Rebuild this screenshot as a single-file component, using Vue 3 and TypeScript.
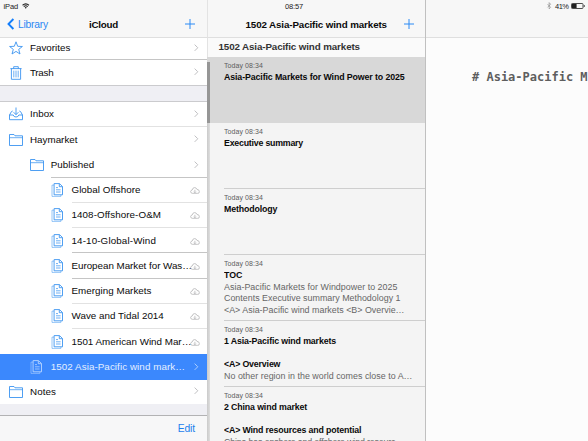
<script setup lang="ts">
interface Row {
  label: string
  icon: 'star' | 'trash' | 'inbox' | 'folder' | 'doc'
  level: number
  end: 'chevron' | 'cloud'
  selected?: boolean
  line?: 'dark' | 'light'
  w: number
}
interface Line { text: string; kind: 'bold' | 'plain'; w: number }

const places: Row[] = [
  { label: 'Favorites', icon: 'star', level: 0, end: 'chevron', line: 'dark', w: 40.4 },
  { label: 'Trash', icon: 'trash', level: 0, end: 'chevron', w: 23.4 },
]
const groups: Row[] = [
  { label: 'Inbox', icon: 'inbox', level: 0, end: 'chevron', line: 'light', w: 24 },
  { label: 'Haymarket', icon: 'folder', level: 0, end: 'chevron', w: 47.5 },
  { label: 'Published', icon: 'folder', level: 1, end: 'chevron', line: 'dark', w: 43.5 },
  { label: 'Global Offshore', icon: 'doc', level: 2, end: 'cloud', line: 'light', w: 69 },
  { label: '1408-Offshore-O&M', icon: 'doc', level: 2, end: 'cloud', line: 'light', w: 89.5 },
  { label: '14-10-Global-Wind', icon: 'doc', level: 2, end: 'cloud', line: 'dark', w: 84.5 },
  { label: 'European Market for Was…', icon: 'doc', level: 2, end: 'cloud', line: 'dark', w: 120.5 },
  { label: 'Emerging Markets', icon: 'doc', level: 2, end: 'cloud', line: 'light', w: 80 },
  { label: 'Wave and Tidal 2014', icon: 'doc', level: 2, end: 'cloud', line: 'light', w: 92.5 },
  { label: '1501 American Wind Mar…', icon: 'doc', level: 2, end: 'cloud', w: 120.5 },
  { label: '1502 Asia-Pacific wind mark…', icon: 'doc', level: 1, end: 'chevron', selected: true, w: 135 },
  { label: 'Notes', icon: 'folder', level: 0, end: 'chevron', w: 25.9 },
]
const sheets: { active?: boolean; lines: Line[] }[] = [
  { active: true, lines: [{ text: 'Asia-Pacific Markets for Wind Power to 2025', kind: 'bold', w: 180.5 }] },
  { lines: [{ text: 'Executive summary', kind: 'bold', w: 79 }] },
  { lines: [{ text: 'Methodology', kind: 'bold', w: 53.3 }] },
  {
    lines: [
      { text: 'TOC', kind: 'bold', w: 18.3 },
      { text: 'Asia-Pacific Markets for Windpower to 2025', kind: 'plain', w: 173.5 },
      { text: 'Contents Executive summary Methodology 1', kind: 'plain', w: 176.5 },
      { text: '<A> Asia-Pacific wind markets <B> Overvie…', kind: 'plain', w: 181 },
    ],
  },
  {
    lines: [
      { text: '1 Asia-Pacific wind markets', kind: 'bold', w: 112.3 },
      { text: '', kind: 'plain', w: 0 },
      { text: '<A> Overview', kind: 'bold', w: 56.3 },
      { text: 'No other region in the world comes close to A…', kind: 'plain', w: 189 },
    ],
  },
  {
    lines: [
      { text: '2 China wind market', kind: 'bold', w: 83 },
      { text: '', kind: 'plain', w: 0 },
      { text: '<A> Wind resources and potential', kind: 'bold', w: 137.3 },
      { text: 'China has onshore and offshore wind resourc…', kind: 'plain', w: 180 },
    ],
  },
]

const ctx = document.createElement('canvas').getContext('2d')!
/** Tracking that makes a label occupy the given width. */
function track(text: string, width: number, font: string) {
  if (!text) return {}
  ctx.font = `${font} "Liberation Sans"`
  return { letterSpacing: `${((width - ctx.measureText(text).width) / text.length).toFixed(3)}px` }
}
</script>

<template>
  <div class="screen">
    <aside class="sidebar">
      <header class="bar">
        <div class="status">
          <span :style="track('iPad', 14.5, '7.5px')">iPad</span>
          <svg class="wifi" viewBox="0 0 8 6"><path d="M.6 2.2Q4-.8 7.4 2.2M1.9 3.6Q4 1.8 6.1 3.6" /><path class="solid" d="M2.9 4.5Q4 3.7 5.1 4.5L4 5.8Z" /></svg>
        </div>
        <div class="nav">
          <svg class="back" viewBox="0 0 8 12"><path d="M6.4 1 1.5 6l4.9 5" /></svg>
          <span class="library" :style="track('Library', 30, '10.3px')">Library</span>
          <b class="title" :style="track('iCloud', 28.9, 'bold 9.8px')">iCloud</b>
          <svg class="plus" viewBox="0 0 10 10"><path d="M5 0v10M0 5h10" /></svg>
        </div>
      </header>
      <div class="tree">
        <template v-for="(group, g) in [places, groups]" :key="g">
          <div v-if="g" class="gap"></div>
          <div
            v-for="row in group"
            :key="row.label"
            class="row"
            :class="['level' + row.level, row.icon, { selected: row.selected, first: row.icon === 'star', last: row.label === 'Notes' }]"
          >
            <span class="icon">
              <svg v-if="row.icon === 'star'" viewBox="0 0 14 14"><path d="M7 .8 8.7 5.3 13.4 5.5 9.7 8.4 11 13 7 10.4 3 13 4.3 8.4.6 5.5 5.3 5.3Z" /></svg>
              <svg v-else-if="row.icon === 'trash'" viewBox="0 0 14 14"><path d="M1.4 2.6h11.2M4.7 2.6V.7h4.6v1.9M2.4 2.6v10.7h9.2V2.6" /><path class="thin" d="M4.8 4.6v6.8M7 4.6v6.8M9.2 4.6v6.8" /></svg>
              <svg v-else-if="row.icon === 'inbox'" viewBox="0 0 14 14"><path d="M7 .5v7M4.6 5.2 7 7.7l2.4-2.5M3.7 4 2.5 4.5.5 8v4.7h13V8l-2-3.5L10.3 4M.5 8h3.7q.5 2 2.8 2t2.8-2h3.7" /></svg>
              <svg v-else-if="row.icon === 'folder'" viewBox="0 0 14 14"><path d="M.5 12.5v-11H5l1 1.3h7.5v9.7Z" /><path class="thin" d="M.5 4.7h13" /></svg>
              <svg v-else viewBox="0 0 14 14"><path d="M3.1.6h5.4l3 2.9v8.3H3.1ZM8.3.8v2.9h3" /><path class="thin" d="M5 4.6h2M5 6.8h4.6M5 9h4.6" /><path class="faint" d="M3 2.1H1v11.3h8.9v-1.5" /></svg>
            </span>
            <span class="body" :class="row.line">
              <span class="label" :style="track(row.label, row.w, '9.8px')">{{ row.label }}</span>
              <svg v-if="row.end === 'chevron'" class="chevron" viewBox="0 0 5 8"><path d="M.7.5 4.2 4 .7 7.5" /></svg>
              <svg v-else class="cloud" viewBox="0 0 10 7"><path d="M2.3 6.3Q.5 6 .6 4.6T2.2 3Q2.6.7 4.5.6T7 2.5Q9.2 2.3 9.3 4.5T7.8 6.3ZM4.9 2.8v2.8M3.9 4.7l1 1 1-1" /></svg>
            </span>
          </div>
        </template>
      </div>
      <footer class="footer"><span :style="track('Edit', 17.2, '10.3px')">Edit</span></footer>
    </aside>

    <section class="middle">
      <header class="bar">
        <div class="status clock"><span :style="track('08:57', 18, '7.5px')">08:57</span></div>
        <div class="nav">
          <b class="sheet-title" :style="track('1502 Asia-Pacific wind markets', 141.8, 'bold 9.8px')">1502 Asia-Pacific wind markets</b>
          <svg class="plus" viewBox="0 0 10 10"><path d="M5 0v10M0 5h10" /></svg>
        </div>
      </header>
      <div class="section" :style="track('1502 Asia-Pacific wind markets', 141.8, 'bold 9.8px')">1502 Asia-Pacific wind markets</div>
      <div class="sheets">
        <article v-for="(sheet, i) in sheets" :key="i" class="sheet" :class="{ active: sheet.active }">
          <div class="edge"></div>
          <div class="content">
            <div class="date" :style="track('Today 08:34', 39, '7px')">Today 08:34</div>
            <div
              v-for="(line, n) in sheet.lines"
              :key="n"
              class="line"
              :class="line.kind"
              :style="track(line.text, line.w, line.kind === 'bold' ? 'bold 8.8px' : '8.9px')"
            >{{ line.text }}</div>
          </div>
        </article>
      </div>
    </section>

    <main class="editor">
      <header class="bar">
        <div class="status right">
          <svg class="bluetooth" viewBox="0 0 5 8"><path d="M.6 2.2 4 5.7 2.4 7.5v-7L4 2.3.6 5.8" /></svg>
          <span :style="track('41%', 13.5, '7.5px')">41%</span>
          <svg class="battery" viewBox="0 0 14 6"><rect x=".5" y=".5" width="11.5" height="5" rx=".8" /><path class="solid" d="M1 1h4.6v4H1ZM12.8 2h.8v2h-.8Z" /></svg>
        </div>
      </header>
      <div class="text"># Asia-Pacific M</div>
    </main>
  </div>
</template>

<style>
body { margin: 0; overflow: hidden; }
</style>

<style scoped>
.screen {
  display: grid;
  grid-template-columns: 207px 219px 162px;
  width: 588px;
  height: 441px;
  overflow: hidden;
  background: #fff;
  color: #0a0a0a;
  font-family: "Liberation Sans", Arial, sans-serif;
  font-size: 9.8px;
  white-space: nowrap;
}
svg { display: block; flex: none; fill: none; stroke: currentColor; overflow: visible; }
.solid { fill: currentColor; stroke: none; }
.bar {
  box-sizing: border-box;
  flex: none;
  height: 38px;
  background: #f7f7f7;
  border-bottom: 1px solid #dfdfdf;
}
.status { display: flex; align-items: center; height: 12px; padding-left: 3.5px; font-size: 7.5px; color: #222; }
.wifi { width: 7.5px; height: 6px; margin-left: 3.5px; stroke-width: 1.1; }
.nav { display: flex; align-items: center; height: 24px; }
.back { width: 8px; height: 12px; margin-left: 6.5px; color: #147efb; stroke-width: 1.9; }
.library { width: 30px; margin-left: 3.5px; font-size: 10.3px; color: #2b87f3; }
.title { width: 29px; margin-left: 41px; }
.plus { width: 10px; height: 10px; color: #2b8af5; stroke-width: 1; }
.sidebar .plus { margin-left: 67px; }

.sidebar, .middle, .editor { display: flex; flex-direction: column; min-width: 0; height: 441px; overflow: hidden; }
.tree { flex: 1; display: flex; flex-direction: column; min-height: 0; overflow: hidden; background: #efeff4; }
.row { display: flex; flex: none; height: 25.25px; background: #fff; }
.row.first { height: 22px; }
.row.last { height: 24px; }
.gap { box-sizing: border-box; flex: none; height: 16.5px; border-top: 1px solid #cbcbce; border-bottom: 1px solid #cbcbce; }
.level0 { padding-left: 9px; }
.level1 { padding-left: 29.7px; }
.level2 { padding-left: 50.5px; }
.icon { display: flex; align-items: center; flex: none; width: 21px; color: #3b94f0; }
.icon svg { width: 14px; height: 14px; stroke-width: .9; }
.thin { stroke-width: .75; }
.faint { opacity: .6; }
.body { box-sizing: border-box; display: flex; flex: 1; align-items: center; min-width: 0; border-bottom: 1px solid transparent; }
.dark { border-color: #c5c5c5; }
.light { border-color: #e2e2e2; }
.first .body, .first .icon { padding-bottom: 2px; }
.label { flex: 1; min-width: 0; }
.chevron { width: 4.5px; height: 7.5px; margin-right: 9px; color: #b8b8bb; stroke-width: 1; }
.cloud { width: 10px; height: 7px; margin: 2px 7px 0 0; color: #b0b0b2; stroke-width: .75; }
.selected { background: #3b88fd; color: #e4efff; }
.selected .icon, .selected .chevron { color: #b9d6ff; }
.footer {
  box-sizing: border-box;
  display: flex;
  align-items: center;
  justify-content: flex-end;
  flex: none;
  height: 26px;
  padding-right: 12px;
  border-top: 1px solid #b2b2b4;
  background: #f7f7f8;
  color: #1c80ed;
  font-size: 10.3px;
}

.middle { box-sizing: border-box; border-right: 1px solid #c0c0c0; }
.middle .bar, .section { border-left: 1px solid #e3e3e3; }
.clock { padding-left: 77px; }
.sheet-title { width: 142px; margin-left: 37.5px; }
.middle .plus { margin-left: 16.5px; }
.section { flex: none; height: 19px; padding-left: 10.5px; line-height: 18px; font-weight: bold; color: #333; background: #fafafa; }
.sheets { flex: 1; min-height: 0; overflow: hidden; }
.sheet { display: flex; height: 66px; background: #f4f4f4; }
.edge { flex: none; width: 3px; margin-right: 14px; background: linear-gradient(90deg, #cacaca, #dedede); }
.active .edge { background: #969696; height: 61px; margin-top: 5px; }
.content { box-sizing: border-box; flex: 1; min-width: 0; height: 66px; padding-top: 4px; border-bottom: 1px solid #cecece; overflow: hidden; }
.active { background: #d8d8d8; }
.active .content { border-color: transparent; }
.date { height: 11px; line-height: 10px; font-size: 7px; color: #5c5c5c; }
.line { height: 11.6px; line-height: 11.6px; font-size: 8.9px; }
.bold { font-weight: bold; font-size: 8.8px; }
.plain { color: #666; }

.editor { background: #fcfcfc; }
.right { padding-left: 120.5px; }
.bluetooth { width: 4.5px; height: 7.5px; color: #888; stroke-width: .7; }
.right span { width: 14px; margin-left: 4px; }
.battery { width: 14px; height: 6px; margin-left: 2px; stroke-width: .8; }
.text { padding: 32px 0 0 46px; font: bold 12px/15px "DejaVu Sans Mono", monospace; color: #5e5e5e; }
</style>
